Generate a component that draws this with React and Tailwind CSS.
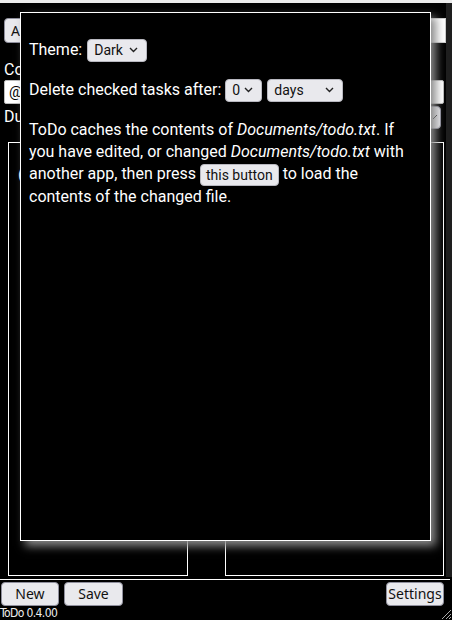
import React from "react";

const Chevron = ({ className = "" }) => (
  <svg width="9" height="6" viewBox="0 0 9 6" className={className}>
    <path d="M1 1l3.5 3.5L8 1" fill="none" stroke="#222" strokeWidth="1.4" />
  </svg>
);

const FakeSelect = ({ value, width }) => (
  <div
    className={`${width} h-[23px] flex items-center justify-between pl-[6px] pr-[8px] bg-[#e9e9ed] border border-[#b8b8c0] rounded-[4px] text-[14px] text-[#111] font-['Roboto',sans-serif]`}
  >
    <span>{value}</span>
    <Chevron />
  </div>
);

const GrayButton = ({ children, className = "" }) => (
  <button
    className={`h-[24px] bg-[#e9e9ed] border border-[#8f8f9d] rounded-[4px] text-[14px] text-[#111] font-['Noto_Sans',sans-serif] leading-none ${className}`}
  >
    {children}
  </button>
);

const SettingsDialog = () => (
  <div className="absolute left-[20px] top-[12px] w-[411px] h-[529px] bg-black border border-white shadow-[5px_5px_9px_#8a8a8a] pl-[8px] pr-[12px] pt-[25px] font-['Roboto',sans-serif] text-white text-[16px]">
    <div className="flex flex-col gap-[16px]">
      <div className="h-[24px] flex items-center gap-[5px]">
        <span>Theme:</span>
        <FakeSelect value="Dark" width="w-[60px]" />
      </div>
      <div className="h-[24px] flex items-center gap-[4px]">
        <span>Delete checked tasks after:</span>
        <FakeSelect value="0" width="w-[37px]" />
        <FakeSelect value="days" width="w-[76px] ml-[1px]" />
      </div>
      <p className="leading-[22px] mt-[1px]">
        ToDo caches the contents of <i>Documents/todo.txt</i>. If you have
        edited, or changed <i>Documents/todo.txt</i> with another app, then
        press{" "}
        <button className="h-[22px] px-[5px] align-middle bg-[#e9e9ed] border border-[#b8b8c0] rounded-[4px] text-[14px] text-[#111] leading-none">
          this button
        </button>{" "}
        to load the contents of the changed file.
      </p>
    </div>
  </div>
);

const App = () => {
  return (
    <div className="relative w-[452px] h-[620px] bg-black overflow-hidden font-['Roboto',sans-serif] text-white">
      <div className="h-[3px] bg-[#ececec]" />
      <div className="flex">
        <div className="w-[446px] flex flex-col pl-[4px]">
          <div className="mt-[15px] h-[25px] flex items-center justify-between">
            <GrayButton className="w-[50px] h-[25px] text-left pl-[6px]">
              Add
            </GrayButton>
            <div className="w-[60px] h-[25px] bg-white border border-[#ccc]" />
          </div>
          <div className="mt-[17px] h-[20px] leading-[20px] text-[16px]">
            Context
          </div>
          <div className="h-[24px] w-[440px] bg-white border border-[#bbb] rounded-[2px] text-black text-[15px] pl-[4px] leading-[22px]">
            @
          </div>
          <div className="h-[26px] flex items-center justify-between pr-[5px] text-[16px]">
            <span>Due</span>
            <div className="w-[13px] h-[23px] bg-[#e9e9ed] border border-[#8f8f9d] rounded-r-[4px] flex items-center justify-center">
              <svg width="6" height="6" viewBox="0 0 6 6">
                <path d="M1 5l4-4" stroke="#333" strokeWidth="1" />
              </svg>
            </div>
          </div>
          <div className="mt-[12px] flex gap-[37px] pl-[4px]">
            <div className="w-[180px] h-[434px] border border-white pl-[9px] pt-[20px] text-[16px]">
              (
            </div>
            <div className="w-[219px] h-[434px] border border-white" />
          </div>
        </div>
        <div className="w-[6px] h-[574px] bg-[#1e1e1e]" />
      </div>
      <div className="mt-[2px] border-t border-white w-[450px]">
        <div className="flex items-center justify-between pt-[2px] pl-[1px] pr-[6px]">
          <div className="flex gap-[5px]">
            <GrayButton className="w-[58px]">New</GrayButton>
            <GrayButton className="w-[59px]">Save</GrayButton>
          </div>
          <GrayButton className="w-[58px]">Settings</GrayButton>
        </div>
        <div className="h-[14px] text-[12px] leading-[14px] tracking-[-0.6px] font-['DejaVu_Sans',sans-serif] [font-stretch:condensed] text-[#eee]">
          ToDo 0.4.00
        </div>
      </div>
      <svg
        className="absolute right-0 bottom-0"
        width="12"
        height="12"
        viewBox="0 0 12 12"
      >
        <path d="M11 2L2 11M11 6L6 11M11 9L9 11" stroke="#aaa" strokeWidth="1" />
      </svg>
      <SettingsDialog />
    </div>
  );
};

export default App;
